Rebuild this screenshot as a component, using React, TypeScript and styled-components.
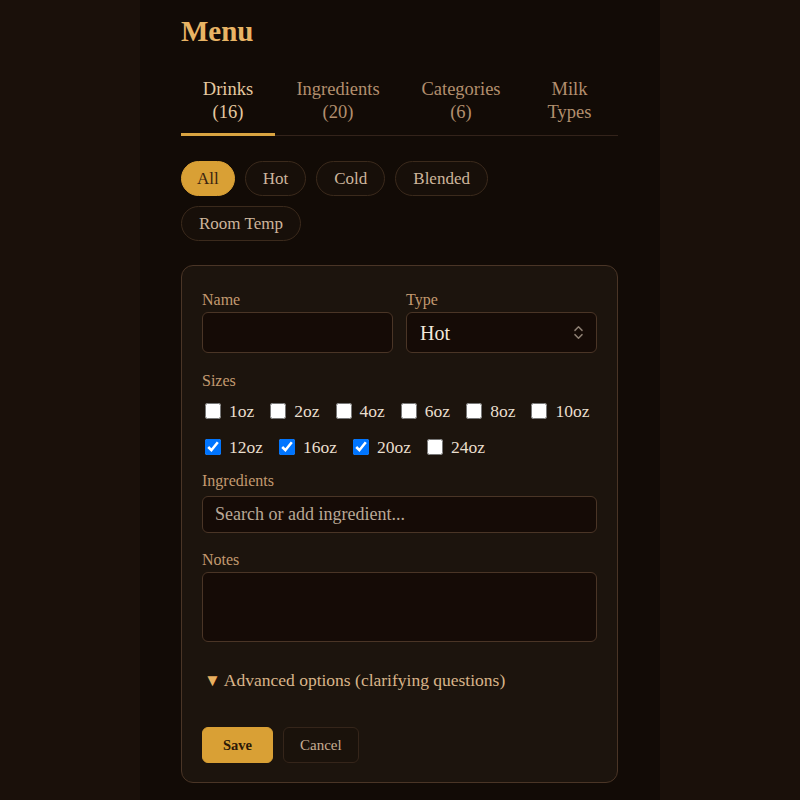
import React from 'react';
import styled, { createGlobalStyle } from 'styled-components';
import { ChevronsUpDown } from 'lucide-react';

const GlobalStyle = createGlobalStyle`
    html, body {
        margin: 0;
        padding: 0;
        background: #1a100a;
        font-family: "Liberation Serif", "Times New Roman", serif;
    }
`;

const Page = styled.div`
    min-height: 800px;
    display: flex;
    justify-content: center;
`;

const Column = styled.main`
    width: 520px;
    box-sizing: border-box;
    padding: 13px 42px 20px 41px;
    background: #120b06;
    min-height: 800px;
`;

const Title = styled.h1`
    margin: 0 0 18px;
    font-size: 29px;
    line-height: 36px;
    font-weight: 700;
    color: #e8b465;
`;

const Tabs = styled.nav`
    display: grid;
    grid-template-columns: 94px 126px 120px 97px;
    border-bottom: 1px solid #33231a;
`;

const Tab = styled.button<{ $active?: boolean }>`
    appearance: none;
    background: none;
    border: none;
    border-bottom: 3px solid ${p => (p.$active ? '#d9a441' : 'transparent')};
    margin-bottom: -1px;
    padding: 11px 0 9px;
    font-family: inherit;
    font-size: 18.5px;
    line-height: 23px;
    color: ${p => (p.$active ? '#e6c9a0' : '#b38f6e')};
    text-align: center;
    cursor: pointer;
`;

const Filters = styled.div`
    display: flex;
    flex-wrap: wrap;
    gap: 10px;
    max-width: 330px;
    margin: 25px 0 24px;
`;

const Chip = styled.button<{ $active?: boolean }>`
    appearance: none;
    height: 35px;
    padding: 0 ${p => (p.$active ? 15 : 17)}px;
    border-radius: 18px;
    border: 1px solid ${p => (p.$active ? '#d9a035' : '#3b2a1c')};
    background: ${p => (p.$active ? '#d9a035' : '#170f09')};
    color: ${p => (p.$active ? '#3b2410' : '#cdb59c')};
    font-family: inherit;
    font-size: 17px;
    cursor: pointer;
`;

const Card = styled.form`
    border: 1px solid #4a3526;
    border-radius: 12px;
    background: #1c140d;
    padding: 24px 20px 19px;
`;

const Row = styled.div`
    display: grid;
    grid-template-columns: 1fr 1fr;
    gap: 13px;
`;

const Field = styled.div<{ $mt?: number }>`
    display: flex;
    flex-direction: column;
    margin-top: ${p => p.$mt ?? 0}px;
`;

const Label = styled.label<{ $mb?: number }>`
    font-size: 16px;
    line-height: 20px;
    color: #c39a70;
    margin-bottom: ${p => p.$mb ?? 2}px;
`;

const inputBase = `
    box-sizing: border-box;
    width: 100%;
    background: #150b06;
    border: 1px solid #4a3526;
    border-radius: 6px;
    font-family: "Liberation Serif", "Times New Roman", serif;
    outline: none;
`;

const TextInput = styled.input<{ $h: number }>`
    ${inputBase}
    height: ${p => p.$h}px;
    padding: 0 12px;
    font-size: 18px;
    color: #f2e8da;

    &::placeholder {
        color: #b9a896;
    }
`;

const SelectWrap = styled.div`
    position: relative;
`;

const Select = styled.select`
    ${inputBase}
    appearance: none;
    height: 41px;
    padding: 0 30px 0 13px;
    font-size: 20px;
    color: #f2e8da;
`;

const SelectIcon = styled(ChevronsUpDown)`
    position: absolute;
    right: 10px;
    top: 12px;
    color: #8d7f72;
    pointer-events: none;
`;

const Checks = styled.div`
    display: flex;
    flex-wrap: wrap;
    column-gap: 13px;
    row-gap: 12px;
    margin-top: 8px;
`;

const CheckItem = styled.label`
    display: flex;
    align-items: center;
    gap: 8px;
    height: 24px;
    font-size: 17.5px;
    color: #eadfce;
    padding-left: 3px;
`;

const Box = styled.input`
    width: 16px;
    height: 16px;
    margin: 0;
`;

const TextArea = styled.textarea`
    ${inputBase}
    height: 70px;
    resize: none;
    padding: 10px 12px;
    font-size: 17px;
    color: #f2e8da;
`;

const Advanced = styled.div`
    margin-top: 27px;
    font-size: 17.5px;
    line-height: 22px;
    color: #d9b48a;
    padding-left: 2px;
`;

const Caret = styled.span`
    color: #e8b060;
    font-size: 17px;
    margin-right: 3px;
`;

const Actions = styled.div`
    display: flex;
    gap: 10px;
    margin-top: 35px;
`;

const Button = styled.button<{ $primary?: boolean }>`
    appearance: none;
    height: 36px;
    padding: 0 ${p => (p.$primary ? 20 : 16)}px;
    border-radius: 6px;
    border: 1px solid ${p => (p.$primary ? '#d9a035' : '#35251a')};
    background: ${p => (p.$primary ? '#d9a035' : '#1a120b')};
    color: ${p => (p.$primary ? '#2a1808' : '#c7ad93')};
    font-family: inherit;
    font-size: ${p => (p.$primary ? 14.5 : 15)}px;
    font-weight: ${p => (p.$primary ? 700 : 400)};
    cursor: pointer;
`;

const tabs = [
    { label: 'Drinks', count: '(16)' },
    { label: 'Ingredients', count: '(20)' },
    { label: 'Categories', count: '(6)' },
    { label: 'Milk', count: 'Types' },
];

const filters = ['All', 'Hot', 'Cold', 'Blended', 'Room Temp'];

const sizes = [
    { s: '1oz', on: false },
    { s: '2oz', on: false },
    { s: '4oz', on: false },
    { s: '6oz', on: false },
    { s: '8oz', on: false },
    { s: '10oz', on: false },
    { s: '12oz', on: true },
    { s: '16oz', on: true },
    { s: '20oz', on: true },
    { s: '24oz', on: false },
];

export default function App() {
    return (
        <Page>
            <GlobalStyle />
            <Column>
                <Title>Menu</Title>
                <Tabs>
                    {tabs.map((t, i) => (
                        <Tab key={t.label} $active={i === 0}>
                            {t.label}
                            <br />
                            {t.count}
                        </Tab>
                    ))}
                </Tabs>
                <Filters>
                    {filters.map((f, i) => (
                        <Chip key={f} type="button" $active={i === 0}>
                            {f}
                        </Chip>
                    ))}
                </Filters>
                <Card onSubmit={e => e.preventDefault()}>
                    <Row>
                        <Field>
                            <Label>Name</Label>
                            <TextInput $h={41} />
                        </Field>
                        <Field>
                            <Label>Type</Label>
                            <SelectWrap>
                                <Select defaultValue="Hot">
                                    <option>Hot</option>
                                    <option>Cold</option>
                                    <option>Blended</option>
                                    <option>Room Temp</option>
                                </Select>
                                <SelectIcon size={17} strokeWidth={2} />
                            </SelectWrap>
                        </Field>
                    </Row>
                    <Field $mt={18}>
                        <Label $mb={0}>Sizes</Label>
                        <Checks>
                            {sizes.map(z => (
                                <CheckItem key={z.s}>
                                    <Box type="checkbox" defaultChecked={z.on} />
                                    {z.s}
                                </CheckItem>
                            ))}
                        </Checks>
                    </Field>
                    <Field $mt={12}>
                        <Label $mb={5}>Ingredients</Label>
                        <TextInput $h={37} placeholder="Search or add ingredient..." />
                    </Field>
                    <Field $mt={17}>
                        <Label>Notes</Label>
                        <TextArea />
                    </Field>
                    <Advanced>
                        <Caret>▼</Caret>Advanced options (clarifying questions)
                    </Advanced>
                    <Actions>
                        <Button type="submit" $primary>
                            Save
                        </Button>
                        <Button type="button">Cancel</Button>
                    </Actions>
                </Card>
            </Column>
        </Page>
    );
}
